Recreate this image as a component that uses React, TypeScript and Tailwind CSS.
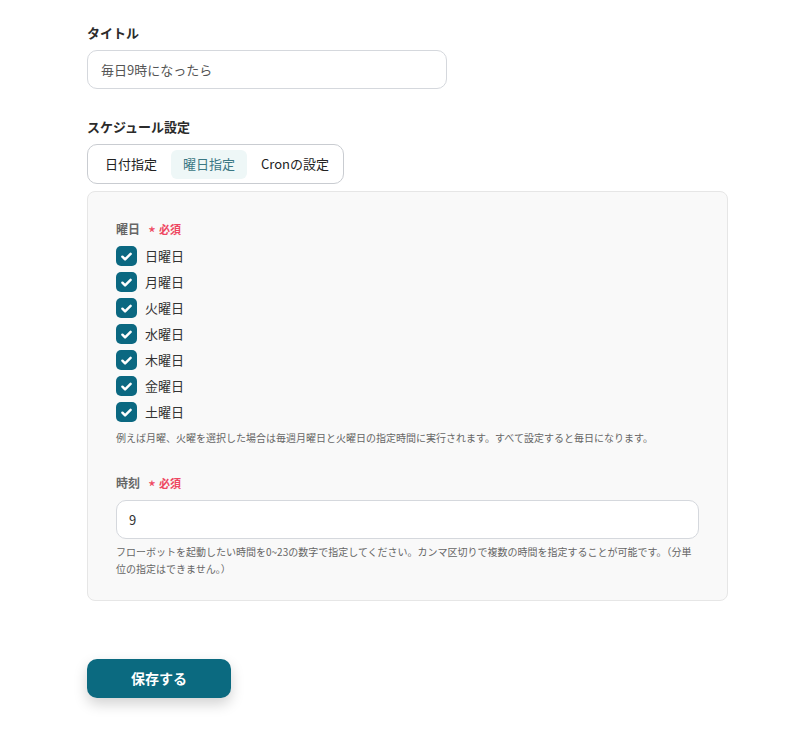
import { useState } from 'react';

const DAYS = ['日曜日', '月曜日', '火曜日', '水曜日', '木曜日', '金曜日', '土曜日'];
const TABS = ['日付指定', '曜日指定', 'Cronの設定'];

const FONT = { fontFamily: '"Noto Sans CJK JP", "Noto Sans", sans-serif' };

export default function App() {
  const [tab, setTab] = useState(1);
  const [checked, setChecked] = useState<boolean[]>(DAYS.map(() => true));

  return (
    <div className="min-h-screen bg-white pl-[87px] pt-[24px] text-[#2b2b2b]" style={FONT}>
      {/* Title */}
      <div className="text-[13px] font-bold leading-[18px]">タイトル</div>
      <div className="mt-[8px] w-[360px] h-[39px] rounded-[10px] border border-[#d5d8dd] flex items-center px-[13px] text-[13px] text-[#555]">
        毎日9時になったら
      </div>

      {/* Schedule */}
      <div className="mt-[29px] text-[13px] font-bold leading-[18px]">スケジュール設定</div>
      <div className="mt-[8px] inline-flex items-center h-[40px] rounded-[10px] border border-[#c9ccd1] pl-[5px] pr-[2px] gap-[2px] text-[13px]">
        {TABS.map((t, i) => (
          <button
            key={t}
            onClick={() => setTab(i)}
            className={
              i === tab
                ? 'h-[29px] px-[12px] rounded-[6px] bg-[#eef7f7] text-[#3b7884]'
                : 'h-[29px] px-[12px] rounded-[6px] text-[#222]'
            }
          >
            {t}
          </button>
        ))}
      </div>

      <div className="mt-[7px] w-[641px] rounded-[8px] border border-[#e6e6e6] bg-[#f9f9f9] px-[28px] pt-[28px] pb-[23px]">
        <Label text="曜日" />
        <div className="mt-[8px] flex flex-col gap-[6px]">
          {DAYS.map((d, i) => (
            <label key={d} className="flex items-center gap-[8px] cursor-pointer">
              <span
                onClick={() => setChecked(c => c.map((v, j) => (j === i ? !v : v)))}
                className={
                  checked[i]
                    ? 'w-[21px] h-[20px] rounded-[5px] bg-[#0b6881] flex items-center justify-center'
                    : 'w-[21px] h-[20px] rounded-[5px] border border-[#bbb] bg-white'
                }
              >
                {checked[i] && (
                  <svg width="13" height="13" viewBox="0 0 12 12" fill="none">
                    <path d="M2.2 6.2l2.5 2.5L9.8 3.6" stroke="white" strokeWidth="2.3" strokeLinecap="round" strokeLinejoin="round" />
                  </svg>
                )}
              </span>
              <span className="text-[13px] leading-[20px] text-[#333]">{d}</span>
            </label>
          ))}
        </div>
        <p className="mt-[8px] text-[10px] leading-[16px] text-[#666]">
          例えば月曜、火曜を選択した場合は毎週月曜日と火曜日の指定時間に実行されます。すべて設定すると毎日になります。
        </p>

        <div className="mt-[28px]">
          <Label text="時刻" />
        </div>
        <div className="mt-[8px] h-[39px] rounded-[10px] border border-[#d5d8dd] bg-white flex items-center px-[12px] text-[13px] text-[#333]">
          9
        </div>
        <p className="mt-[4px] text-[10px] leading-[17px] text-[#666]">
          フローボットを起動したい時間を0~23の数字で指定してください。カンマ区切りで複数の時間を指定することが可能です。（分単位の指定はできません。）
        </p>
      </div>

      <button className="mt-[58px] w-[144px] h-[39px] rounded-[10px] bg-[#0b6a80] text-white text-[14px] font-bold shadow-[0_6px_14px_rgba(0,0,0,0.18)]">
        保存する
      </button>
    </div>
  );
}

function Label({ text }: { text: string }) {
  return (
    <div className="flex items-center gap-[8px] leading-[18px]">
      <span className="text-[12px] font-bold text-[#666]">{text}</span>
      <span className="text-[11px] font-bold text-[#ee4862] flex items-center gap-[3px]">
        <span className="text-[17px] font-normal leading-[18px] relative top-[4px]">*</span>必須
      </span>
    </div>
  );
}
